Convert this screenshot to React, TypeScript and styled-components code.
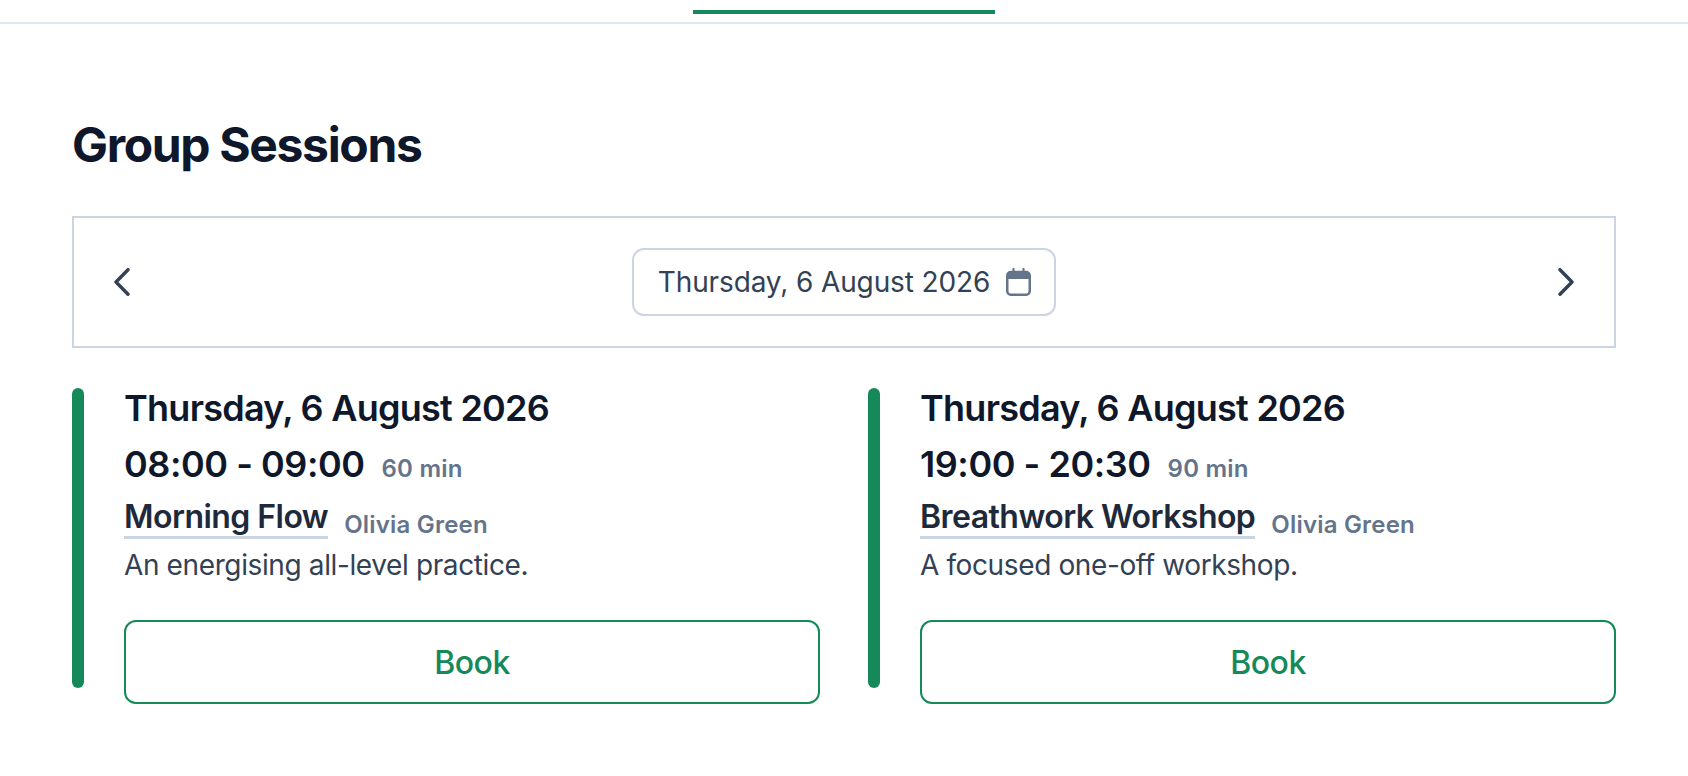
import React from "react";
import styled, { createGlobalStyle } from "styled-components";

type Session = {
  id: number;
  date: string;
  time: string;
  duration: string;
  title: string;
  teacher: string;
  description: string;
};

const SESSION_DATE = "Thursday, 6 August 2026";

const sessions: Session[] = [
  {
    id: 1,
    date: SESSION_DATE,
    time: "08:00 - 09:00",
    duration: "60 min",
    title: "Morning Flow",
    teacher: "Olivia Green",
    description: "An energising all-level practice.",
  },
  {
    id: 2,
    date: SESSION_DATE,
    time: "19:00 - 20:30",
    duration: "90 min",
    title: "Breathwork Workshop",
    teacher: "Olivia Green",
    description: "A focused one-off workshop.",
  },
];

const Chevron = ({ flip }: { flip?: boolean }) => (
  <svg width="16" height="28" viewBox="0 0 16 28" fill="none">
    <path
      d={flip ? "M2 1.7L14 14L2 26.3" : "M14 1.7L2 14L14 26.3"}
      stroke="#334155"
      strokeWidth="3.4"
      strokeLinecap="round"
      strokeLinejoin="round"
    />
  </svg>
);

const CalendarIcon = () => (
  <svg width="25" height="28" viewBox="0 0 25 28" fill="none">
    <rect x="1.25" y="4" width="22.5" height="22.7" rx="3.5" stroke="#64748b" strokeWidth="2.5" />
    <path d="M1.25 7.5a3.5 3.5 0 0 1 3.5-3.5h15.5a3.5 3.5 0 0 1 3.5 3.5V11H1.25z" fill="#64748b" />
    <path d="M7.5 1v4M17.5 1v4" stroke="#64748b" strokeWidth="2.2" strokeLinecap="round" />
  </svg>
);

const App = () => {
  return (
    <>
      <GlobalStyle />
      <TabBar>
        <ActiveTab />
      </TabBar>
      <Main>
        <Heading>Group Sessions</Heading>
        <DateNav>
          <NavButton aria-label="Previous day">
            <Chevron />
          </NavButton>
          <DatePicker>
            {SESSION_DATE}
            <CalendarIcon />
          </DatePicker>
          <NavButton aria-label="Next day">
            <Chevron flip />
          </NavButton>
        </DateNav>
        <SessionGrid>
          {sessions.map((session) => (
            <SessionCard key={session.id}>
              <AccentBar />
              <SessionBody>
                <SessionDate>{session.date}</SessionDate>
                <TimeRow>
                  <SessionTime>{session.time}</SessionTime>
                  <Meta>{session.duration}</Meta>
                </TimeRow>
                <TitleRow>
                  <SessionTitle>{session.title}</SessionTitle>
                  <Meta>{session.teacher}</Meta>
                </TitleRow>
                <Description>{session.description}</Description>
                <BookButton>Book</BookButton>
              </SessionBody>
            </SessionCard>
          ))}
        </SessionGrid>
      </Main>
    </>
  );
};

export default App;

const GlobalStyle = createGlobalStyle`
  html, body {
    margin: 0;
    background: #ffffff;
    font-family: Inter, "Liberation Sans", sans-serif;
  }
  * {
    box-sizing: border-box;
  }
`;

const TabBar = styled.div`
  display: flex;
  justify-content: center;
  height: 24px;
  padding-top: 10px;
  border-bottom: 2px solid #e2e8f0;
`;

const ActiveTab = styled.div`
  width: 302px;
  height: 4px;
  background: #15895a;
`;

const Main = styled.main`
  padding: 94px 72px 0;
`;

const Heading = styled.h1`
  margin: 0 0 44px;
  font-size: 48px;
  line-height: 54px;
  font-weight: 700;
  letter-spacing: -1.35px;
  color: #0f172a;
`;

const DateNav = styled.div`
  display: flex;
  align-items: center;
  justify-content: space-between;
  height: 132px;
  padding: 0 40px;
  border: 2px solid #cbd5e1;
`;

const NavButton = styled.button`
  display: flex;
  padding: 0;
  border: 0;
  background: none;
`;

const DatePicker = styled.div`
  display: flex;
  align-items: center;
  gap: 16px;
  height: 68px;
  padding: 0 23px 0 24px;
  border: 2px solid #cbd5e1;
  border-radius: 12px;
  font-size: 28px;
  letter-spacing: -0.12px;
  color: #334155;
`;

const SessionGrid = styled.div`
  display: grid;
  grid-template-columns: 1fr 1fr;
  gap: 48px;
  margin-top: 40px;
`;

const SessionCard = styled.article`
  display: flex;
  gap: 40px;
`;

const AccentBar = styled.div`
  flex: 0 0 12px;
  margin-bottom: 16px;
  border-radius: 6px;
  background: #15895a;
`;

const SessionBody = styled.div`
  flex: 1;
  display: flex;
  flex-direction: column;
`;

const SessionDate = styled.div`
  font-size: 36px;
  line-height: 40px;
  font-weight: 600;
  letter-spacing: -0.74px;
  color: #0f172a;
`;

const TimeRow = styled.div`
  display: flex;
  align-items: baseline;
  gap: 17px;
  margin-top: 15px;
`;

const SessionTime = styled.div`
  font-size: 36px;
  line-height: 42px;
  font-weight: 600;
  letter-spacing: -0.45px;
  color: #0f172a;
`;

const Meta = styled.span`
  font-size: 24px;
  line-height: 29px;
  font-weight: 600;
  letter-spacing: 0.2px;
  color: #64748b;
`;

const TitleRow = styled.div`
  display: flex;
  align-items: flex-end;
  gap: 16px;
  margin-top: 13px;
`;

const SessionTitle = styled.span`
  border-bottom: 3px solid #cbd5e1;
  font-size: 32px;
  line-height: 38px;
  font-weight: 600;
  letter-spacing: -0.54px;
  color: #1e293b;
`;

const Description = styled.p`
  margin: 8px 0 0;
  font-size: 28px;
  line-height: 36px;
  letter-spacing: -0.38px;
  color: #334155;
`;

const BookButton = styled.button`
  height: 84px;
  margin-top: 37px;
  border: 2px solid #15895a;
  border-radius: 12px;
  background: #ffffff;
  font-family: inherit;
  font-size: 32px;
  font-weight: 500;
  letter-spacing: -0.5px;
  color: #15895a;
`;
